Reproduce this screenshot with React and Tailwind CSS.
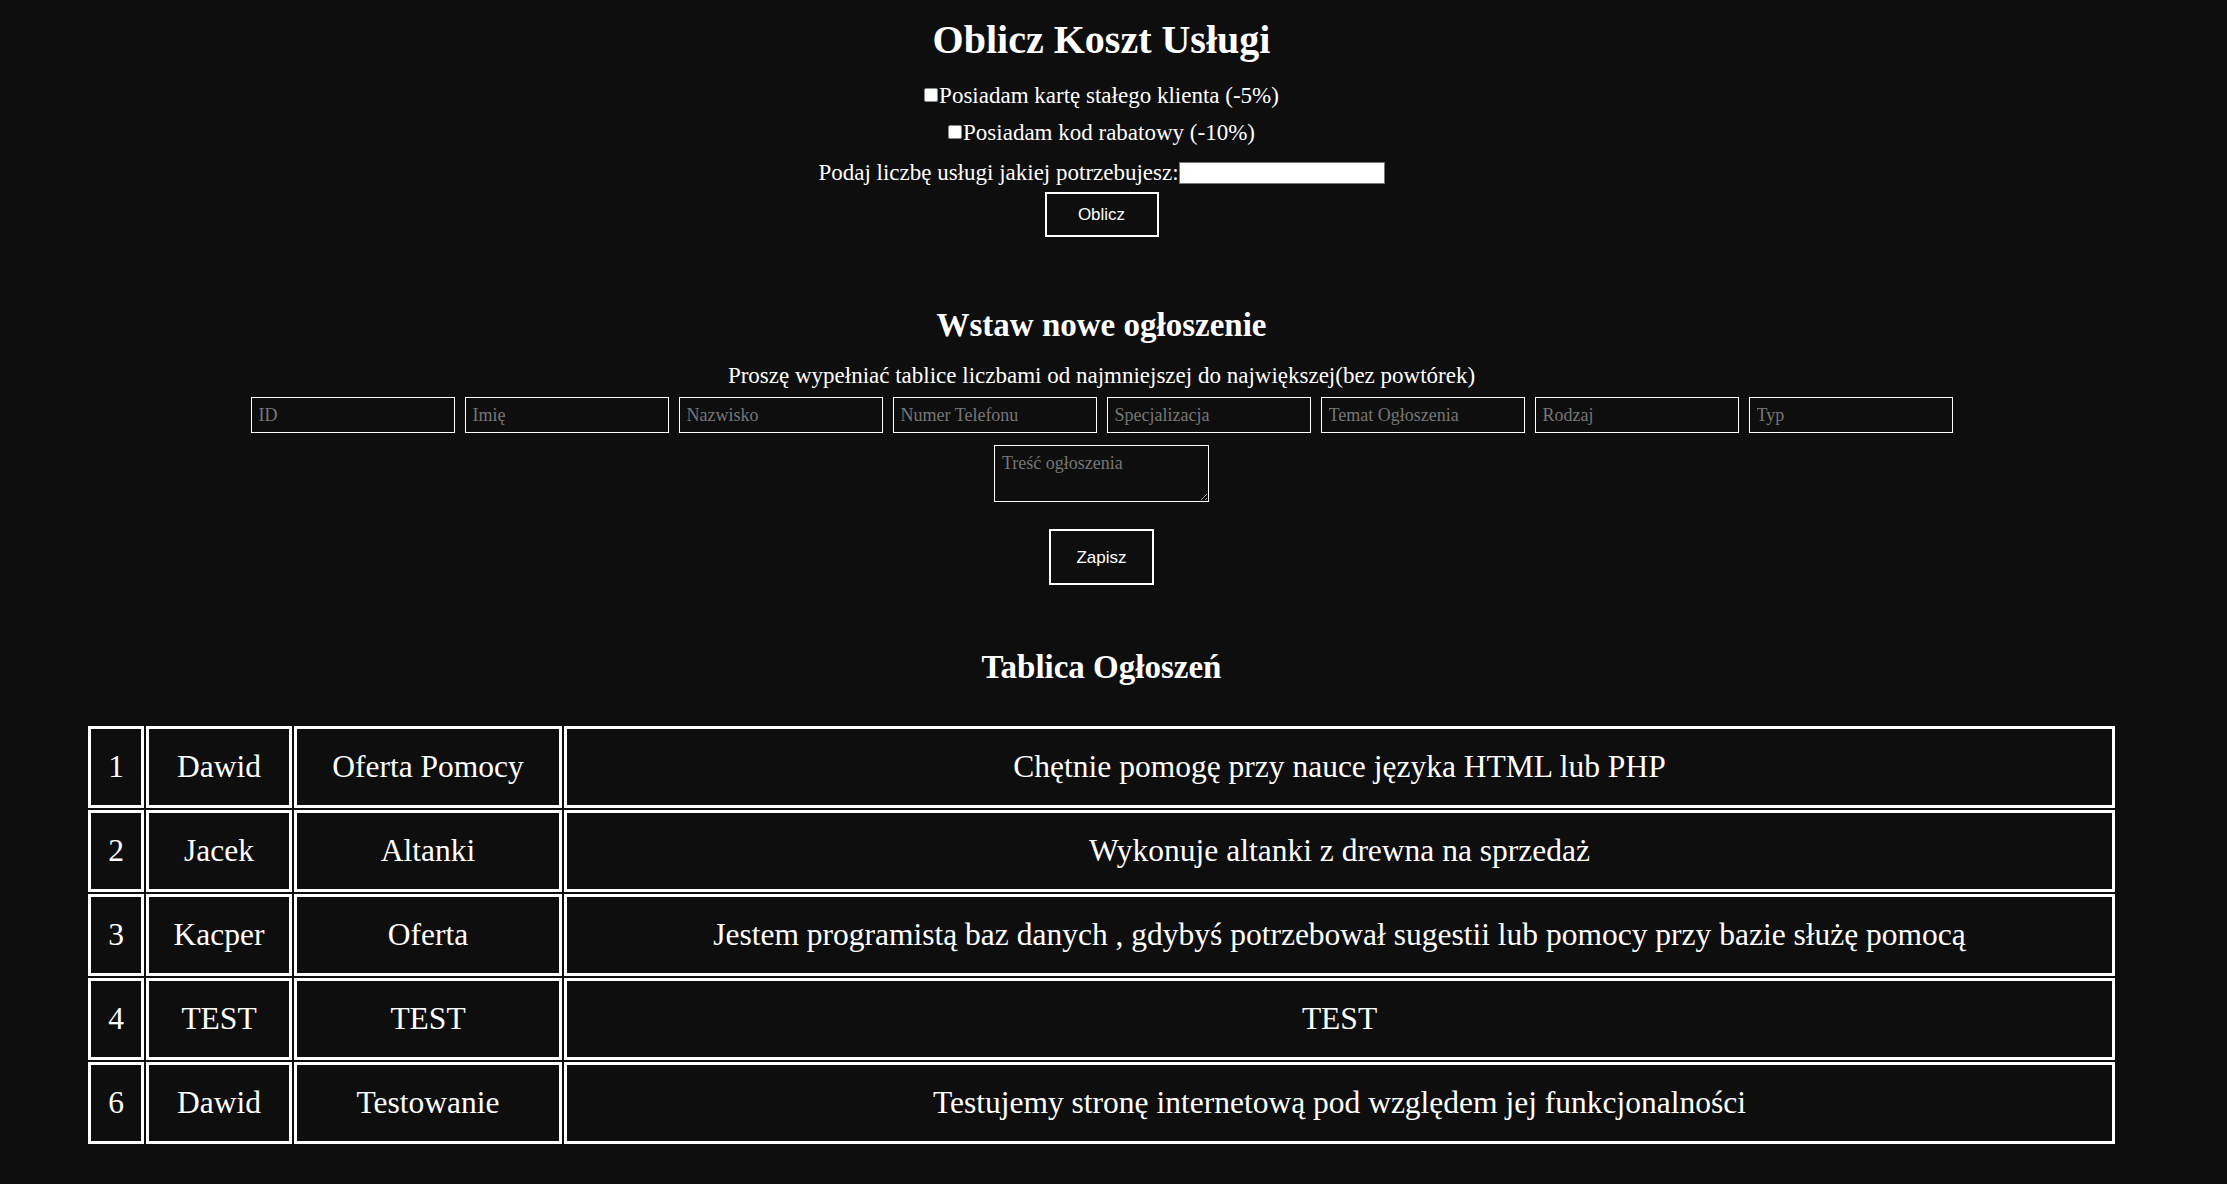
import React from "react";

const rows = [
  ["1", "Dawid", "Oferta Pomocy", "Chętnie pomogę przy nauce języka HTML lub PHP"],
  ["2", "Jacek", "Altanki", "Wykonuje altanki z drewna na sprzedaż"],
  ["3", "Kacper", "Oferta", "Jestem programistą baz danych , gdybyś potrzebował sugestii lub pomocy przy bazie służę pomocą"],
  ["4", "TEST", "TEST", "TEST"],
  ["6", "Dawid", "Testowanie", "Testujemy stronę internetową pod względem jej funkcjonalności"],
];

const fields = ["ID", "Imię", "Nazwisko", "Numer Telefonu", "Specjalizacja", "Temat Ogłoszenia", "Rodzaj", "Typ"];

export default function App() {
  return (
    <div className="min-h-[1184px] w-full bg-[#0e0e0e] text-white font-['Liberation_Serif',serif]">
      <div className="w-[2203px] flex flex-col items-center">
        <h1 className="mt-[12px] h-[56px] leading-[56px] text-[40px] font-bold">Oblicz Koszt Usługi</h1>

        <label className="mt-[14px] h-[28px] flex items-center text-[23px] leading-[28px]">
          <span className="w-[14px] h-[14px] mr-[1px] -mt-[3px] bg-white border border-[#8a8a8a] rounded-[2px] inline-block"></span>
          Posiadam kartę stałego klienta (-5%)
        </label>
        <label className="mt-[9px] h-[28px] flex items-center text-[23px] leading-[28px]">
          <span className="w-[14px] h-[14px] mr-[1px] -mt-[3px] bg-white border border-[#8a8a8a] rounded-[2px] inline-block"></span>
          Posiadam kod rabatowy (-10%)
        </label>
        <div className="mt-[12px] h-[28px] flex items-center text-[23px] leading-[28px]">
          <span>Podaj liczbę usługi jakiej potrzebujesz:</span>
          <input type="text" className="w-[206px] h-[22px] bg-white border border-[#767676] outline-none" />
        </div>
        <button className="mt-[5px] w-[114px] h-[45px] border-2 border-white bg-[#0e0e0e] text-white text-[17px] font-['Liberation_Sans',sans-serif]">
          Oblicz
        </button>

        <h2 className="mt-[66px] h-[44px] leading-[44px] text-[33px] font-bold">Wstaw nowe ogłoszenie</h2>
        <p className="mt-[15px] h-[28px] leading-[28px] text-[23px]">
          Proszę wypełniać tablice liczbami od najmniejszej do największej(bez powtórek)
        </p>
        <div className="mt-[7px] flex gap-[10px]">
          {fields.map((f) => (
            <input
              key={f}
              type="text"
              placeholder={f}
              className="w-[204px] h-[36px] border border-white bg-[#0e0e0e] px-[7px] text-[18px] text-white placeholder:text-[#767676] outline-none font-['Liberation_Serif',serif]"
            />
          ))}
        </div>
        <textarea
          placeholder="Treść ogłoszenia"
          className="mt-[12px] w-[215px] h-[57px] border border-white bg-[#0e0e0e] px-[7px] pt-[6px] pb-[2px] text-[18px] leading-[22px] text-white placeholder:text-[#767676] outline-none font-['Liberation_Serif',serif]"
        ></textarea>
        <button className="mt-[27px] w-[105px] h-[56px] border-2 border-white bg-[#0e0e0e] text-white text-[17px] font-['Liberation_Sans',sans-serif] pt-[2px]">
          Zapisz
        </button>

        <h2 className="mt-[60px] h-[44px] leading-[44px] text-[33px] font-bold">Tablica Ogłoszeń</h2>

        <table className="mt-[35px] w-[2031px] table-fixed border-separate border-spacing-[2px] text-[31.5px]">
          <tbody>
            {rows.map((r, i) => (
              <tr key={i}>
                <td className="w-[56px] h-[82px] border-[3px] border-white text-center align-middle p-0">{r[0]}</td>
                <td className="w-[146px] h-[82px] border-[3px] border-white text-center align-middle p-0">{r[1]}</td>
                <td className="w-[268px] h-[82px] border-[3px] border-white text-center align-middle p-0">{r[2]}</td>
                <td className="h-[82px] border-[3px] border-white text-center align-middle p-0">{r[3]}</td>
              </tr>
            ))}
          </tbody>
        </table>
      </div>
    </div>
  );
}
